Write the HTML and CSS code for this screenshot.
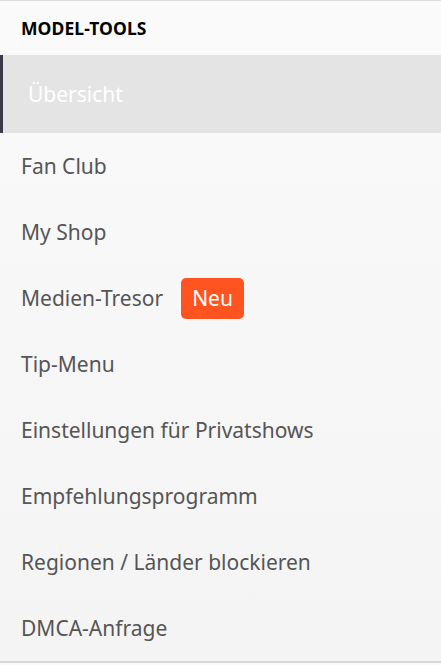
FILE: index.html
```html
<!DOCTYPE html>
<html lang="de">
<head>
  <meta charset="UTF-8">
  <title>Model-Tools</title>
  <link rel="stylesheet" href="styles.css">
</head>
<body>
  <nav class="tools">
    <div class="tools-title">MODEL-TOOLS</div>
    <ul class="tools-list">
      <li class="tools-item active">Übersicht</li>
      <li class="tools-item">Fan Club</li>
      <li class="tools-item">My Shop</li>
      <li class="tools-item">Medien-Tresor <span class="badge">Neu</span></li>
      <li class="tools-item">Tip-Menu</li>
      <li class="tools-item">Einstellungen für Privatshows</li>
      <li class="tools-item">Empfehlungsprogramm</li>
      <li class="tools-item">Regionen / Länder blockieren</li>
      <li class="tools-item">DMCA-Anfrage</li>
    </ul>
  </nav>
</body>
</html>
```

FILE: styles.css
```css
/* Global Settings */
* { margin: 0; padding: 0; box-sizing: border-box; }
body {
  background: #fafafa;
  font-family: 'Noto Sans', 'Open Sans', sans-serif;
  color: #555;
}

/* Sidebar block */
.tools {
  border-top: 1px solid #dcdcdc;
  border-bottom: 2px solid #d6d6d6;
  background: linear-gradient(#fafafa, #f4f4f4);
}
.tools-title {
  height: 54px;
  padding: 15px 21px 0;
  font-size: 17.5px;
  font-weight: 700;
  letter-spacing: 0.1px;
  color: #000;
}

/* Menu entries */
.tools-list { list-style: none; }
.tools-item {
  display: flex;
  align-items: center;
  gap: 18px;
  height: 66px;
  padding: 0 21px;
  font-size: 21px;
  color: #555;
}
.tools-item.active {
  height: 78px;
  padding-left: 25px;
  border-left: 3px solid #3b3a48;
  background: #e4e4e4;
  color: #fff;
}

/* "Neu" label */
.badge {
  display: inline-flex;
  align-items: center;
  height: 41px;
  padding: 0 11px;
  border-radius: 5px;
  background: #ff5420;
  color: #fff;
  font-size: 21px;
}
```
